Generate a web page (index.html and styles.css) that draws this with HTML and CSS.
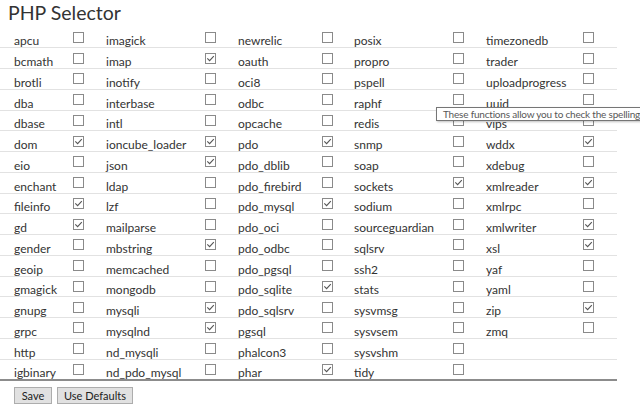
FILE: index.html
```html
<!DOCTYPE html>
<html>
<head>
<meta charset="utf-8">
<title>PHP Selector</title>
<link rel="stylesheet" href="styles.css">
</head>
<body>
<div class="page">
  <h1 class="title">PHP Selector</h1>
  <table class="ext-table">
    <colgroup>
      <col class="w-n1"><col class="w-b1"><col class="w-n2"><col class="w-b2"><col class="w-n3"><col class="w-b3"><col class="w-n4"><col class="w-b4"><col class="w-n5"><col class="w-b5">
    </colgroup>
    <tbody>
      <tr><td>apcu</td><td><input type="checkbox"></td><td>imagick</td><td><input type="checkbox"></td><td>newrelic</td><td><input type="checkbox"></td><td>posix</td><td><input type="checkbox"></td><td>timezonedb</td><td><input type="checkbox"></td></tr>
      <tr><td>bcmath</td><td><input type="checkbox"></td><td>imap</td><td><input type="checkbox" checked></td><td>oauth</td><td><input type="checkbox"></td><td>propro</td><td><input type="checkbox"></td><td>trader</td><td><input type="checkbox"></td></tr>
      <tr><td>brotli</td><td><input type="checkbox"></td><td>inotify</td><td><input type="checkbox"></td><td>oci8</td><td><input type="checkbox"></td><td>pspell</td><td><input type="checkbox"></td><td>uploadprogress</td><td><input type="checkbox"></td></tr>
      <tr><td>dba</td><td><input type="checkbox"></td><td>interbase</td><td><input type="checkbox"></td><td>odbc</td><td><input type="checkbox"></td><td>raphf</td><td><input type="checkbox"></td><td>uuid</td><td><input type="checkbox"></td></tr>
      <tr><td>dbase</td><td><input type="checkbox"></td><td>intl</td><td><input type="checkbox"></td><td>opcache</td><td><input type="checkbox"></td><td>redis</td><td><input type="checkbox"></td><td>vips</td><td><input type="checkbox"></td></tr>
      <tr><td>dom</td><td><input type="checkbox" checked></td><td>ioncube_loader</td><td><input type="checkbox" checked></td><td>pdo</td><td><input type="checkbox" checked></td><td>snmp</td><td><input type="checkbox"></td><td>wddx</td><td><input type="checkbox" checked></td></tr>
      <tr><td>eio</td><td><input type="checkbox"></td><td>json</td><td><input type="checkbox" checked></td><td>pdo_dblib</td><td><input type="checkbox"></td><td>soap</td><td><input type="checkbox"></td><td>xdebug</td><td><input type="checkbox"></td></tr>
      <tr><td>enchant</td><td><input type="checkbox"></td><td>ldap</td><td><input type="checkbox"></td><td>pdo_firebird</td><td><input type="checkbox"></td><td>sockets</td><td><input type="checkbox" checked></td><td>xmlreader</td><td><input type="checkbox" checked></td></tr>
      <tr><td>fileinfo</td><td><input type="checkbox" checked></td><td>lzf</td><td><input type="checkbox"></td><td>pdo_mysql</td><td><input type="checkbox" checked></td><td>sodium</td><td><input type="checkbox"></td><td>xmlrpc</td><td><input type="checkbox"></td></tr>
      <tr><td>gd</td><td><input type="checkbox" checked></td><td>mailparse</td><td><input type="checkbox"></td><td>pdo_oci</td><td><input type="checkbox"></td><td>sourceguardian</td><td><input type="checkbox"></td><td>xmlwriter</td><td><input type="checkbox" checked></td></tr>
      <tr><td>gender</td><td><input type="checkbox"></td><td>mbstring</td><td><input type="checkbox" checked></td><td>pdo_odbc</td><td><input type="checkbox"></td><td>sqlsrv</td><td><input type="checkbox"></td><td>xsl</td><td><input type="checkbox" checked></td></tr>
      <tr><td>geoip</td><td><input type="checkbox"></td><td>memcached</td><td><input type="checkbox"></td><td>pdo_pgsql</td><td><input type="checkbox"></td><td>ssh2</td><td><input type="checkbox"></td><td>yaf</td><td><input type="checkbox"></td></tr>
      <tr><td>gmagick</td><td><input type="checkbox"></td><td>mongodb</td><td><input type="checkbox"></td><td>pdo_sqlite</td><td><input type="checkbox" checked></td><td>stats</td><td><input type="checkbox"></td><td>yaml</td><td><input type="checkbox"></td></tr>
      <tr><td>gnupg</td><td><input type="checkbox"></td><td>mysqli</td><td><input type="checkbox" checked></td><td>pdo_sqlsrv</td><td><input type="checkbox"></td><td>sysvmsg</td><td><input type="checkbox"></td><td>zip</td><td><input type="checkbox" checked></td></tr>
      <tr><td>grpc</td><td><input type="checkbox"></td><td>mysqlnd</td><td><input type="checkbox" checked></td><td>pgsql</td><td><input type="checkbox"></td><td>sysvsem</td><td><input type="checkbox"></td><td>zmq</td><td><input type="checkbox"></td></tr>
      <tr><td>http</td><td><input type="checkbox"></td><td>nd_mysqli</td><td><input type="checkbox"></td><td>phalcon3</td><td><input type="checkbox"></td><td>sysvshm</td><td><input type="checkbox"></td><td></td><td></td></tr>
      <tr><td>igbinary</td><td><input type="checkbox"></td><td>nd_pdo_mysql</td><td><input type="checkbox"></td><td>phar</td><td><input type="checkbox" checked></td><td>tidy</td><td><input type="checkbox"></td><td></td><td></td></tr>
    </tbody>
  </table>
  <div class="actions">
    <button class="btn" type="button">Save</button>
    <button class="btn" type="button">Use Defaults</button>
  </div>
  <div class="tooltip">These functions allow you to check the spelling</div>
</div>
</body>
</html>
```

FILE: styles.css
```css
html, body {
  margin: 0;
  padding: 0;
  background: #ffffff;
  overflow: hidden;
}

.page {
  position: relative;
  width: 640px;
  height: 413px;
  font-family: Lato, "Open Sans", sans-serif;
  color: #333333;
}

.title {
  margin: 0;
  padding: 0 0 0 8px;
  height: 27px;
  line-height: 26px;
  font-size: 19.5px;
  font-weight: normal;
  color: #333333;
}

.ext-table {
  table-layout: fixed;
  border-collapse: collapse;
  width: 617px;
  font-size: 12px;
  border-bottom: 2px solid #8c8c8c;
}

.w-n1 { width: 60px; }
.w-b1 { width: 33px; }
.w-n2 { width: 99px; }
.w-b2 { width: 33px; }
.w-n3 { width: 84px; }
.w-b3 { width: 32px; }
.w-n4 { width: 99px; }
.w-b4 { width: 33px; }
.w-n5 { width: 97px; }
.w-b5 { width: 47px; }

.ext-table tr {
  border-top: 1px solid #e2e2e2;
}

.ext-table tr:first-child {
  border-top: none;
}

.ext-table td {
  height: 20.75px;
  padding: 0 0 0 13px;
  box-sizing: border-box;
  line-height: 12px;
  vertical-align: bottom;
  white-space: nowrap;
  overflow: hidden;
}

.ext-table td:first-child {
  padding-left: 14px;
}

.ext-table td:nth-child(even) {
  vertical-align: middle;
}

.ext-table input[type="checkbox"] {
  -webkit-appearance: none;
  appearance: none;
  display: block;
  margin: 0;
  width: 11px;
  height: 11px;
  box-sizing: border-box;
  border: 1px solid #8a8a8a;
  border-radius: 0;
  background: #ffffff;
}

.ext-table input[type="checkbox"]:checked {
  background: #ffffff url("data:image/svg+xml,%3Csvg xmlns='http://www.w3.org/2000/svg' width='9' height='9' viewBox='0 0 9 9'%3E%3Cpath d='M1.3 4.4 L3.6 6.6 L7.8 2.2' fill='none' stroke='%23555555' stroke-width='1.1'/%3E%3C/svg%3E") no-repeat center;
}

.actions {
  display: flex;
  gap: 5px;
  padding: 6px 0 0 14px;
}

.btn {
  font-family: Lato, sans-serif;
  font-size: 11px;
  height: 17px;
  min-width: 38px;
  padding: 0 6px;
  margin: 0;
  background: #e1e1e1;
  border: 1px solid #adadad;
  border-radius: 0;
  color: #222222;
  line-height: 15px;
}

.tooltip {
  position: absolute;
  left: 436px;
  top: 107px;
  padding: 0 6px;
  font-size: 10px;
  letter-spacing: -0.2px;
  line-height: 12px;
  color: #575757;
  background: #ffffff;
  border: 1px solid #767676;
  white-space: nowrap;
  box-shadow: 1px 1px 2px rgba(0, 0, 0, 0.25);
}
```
